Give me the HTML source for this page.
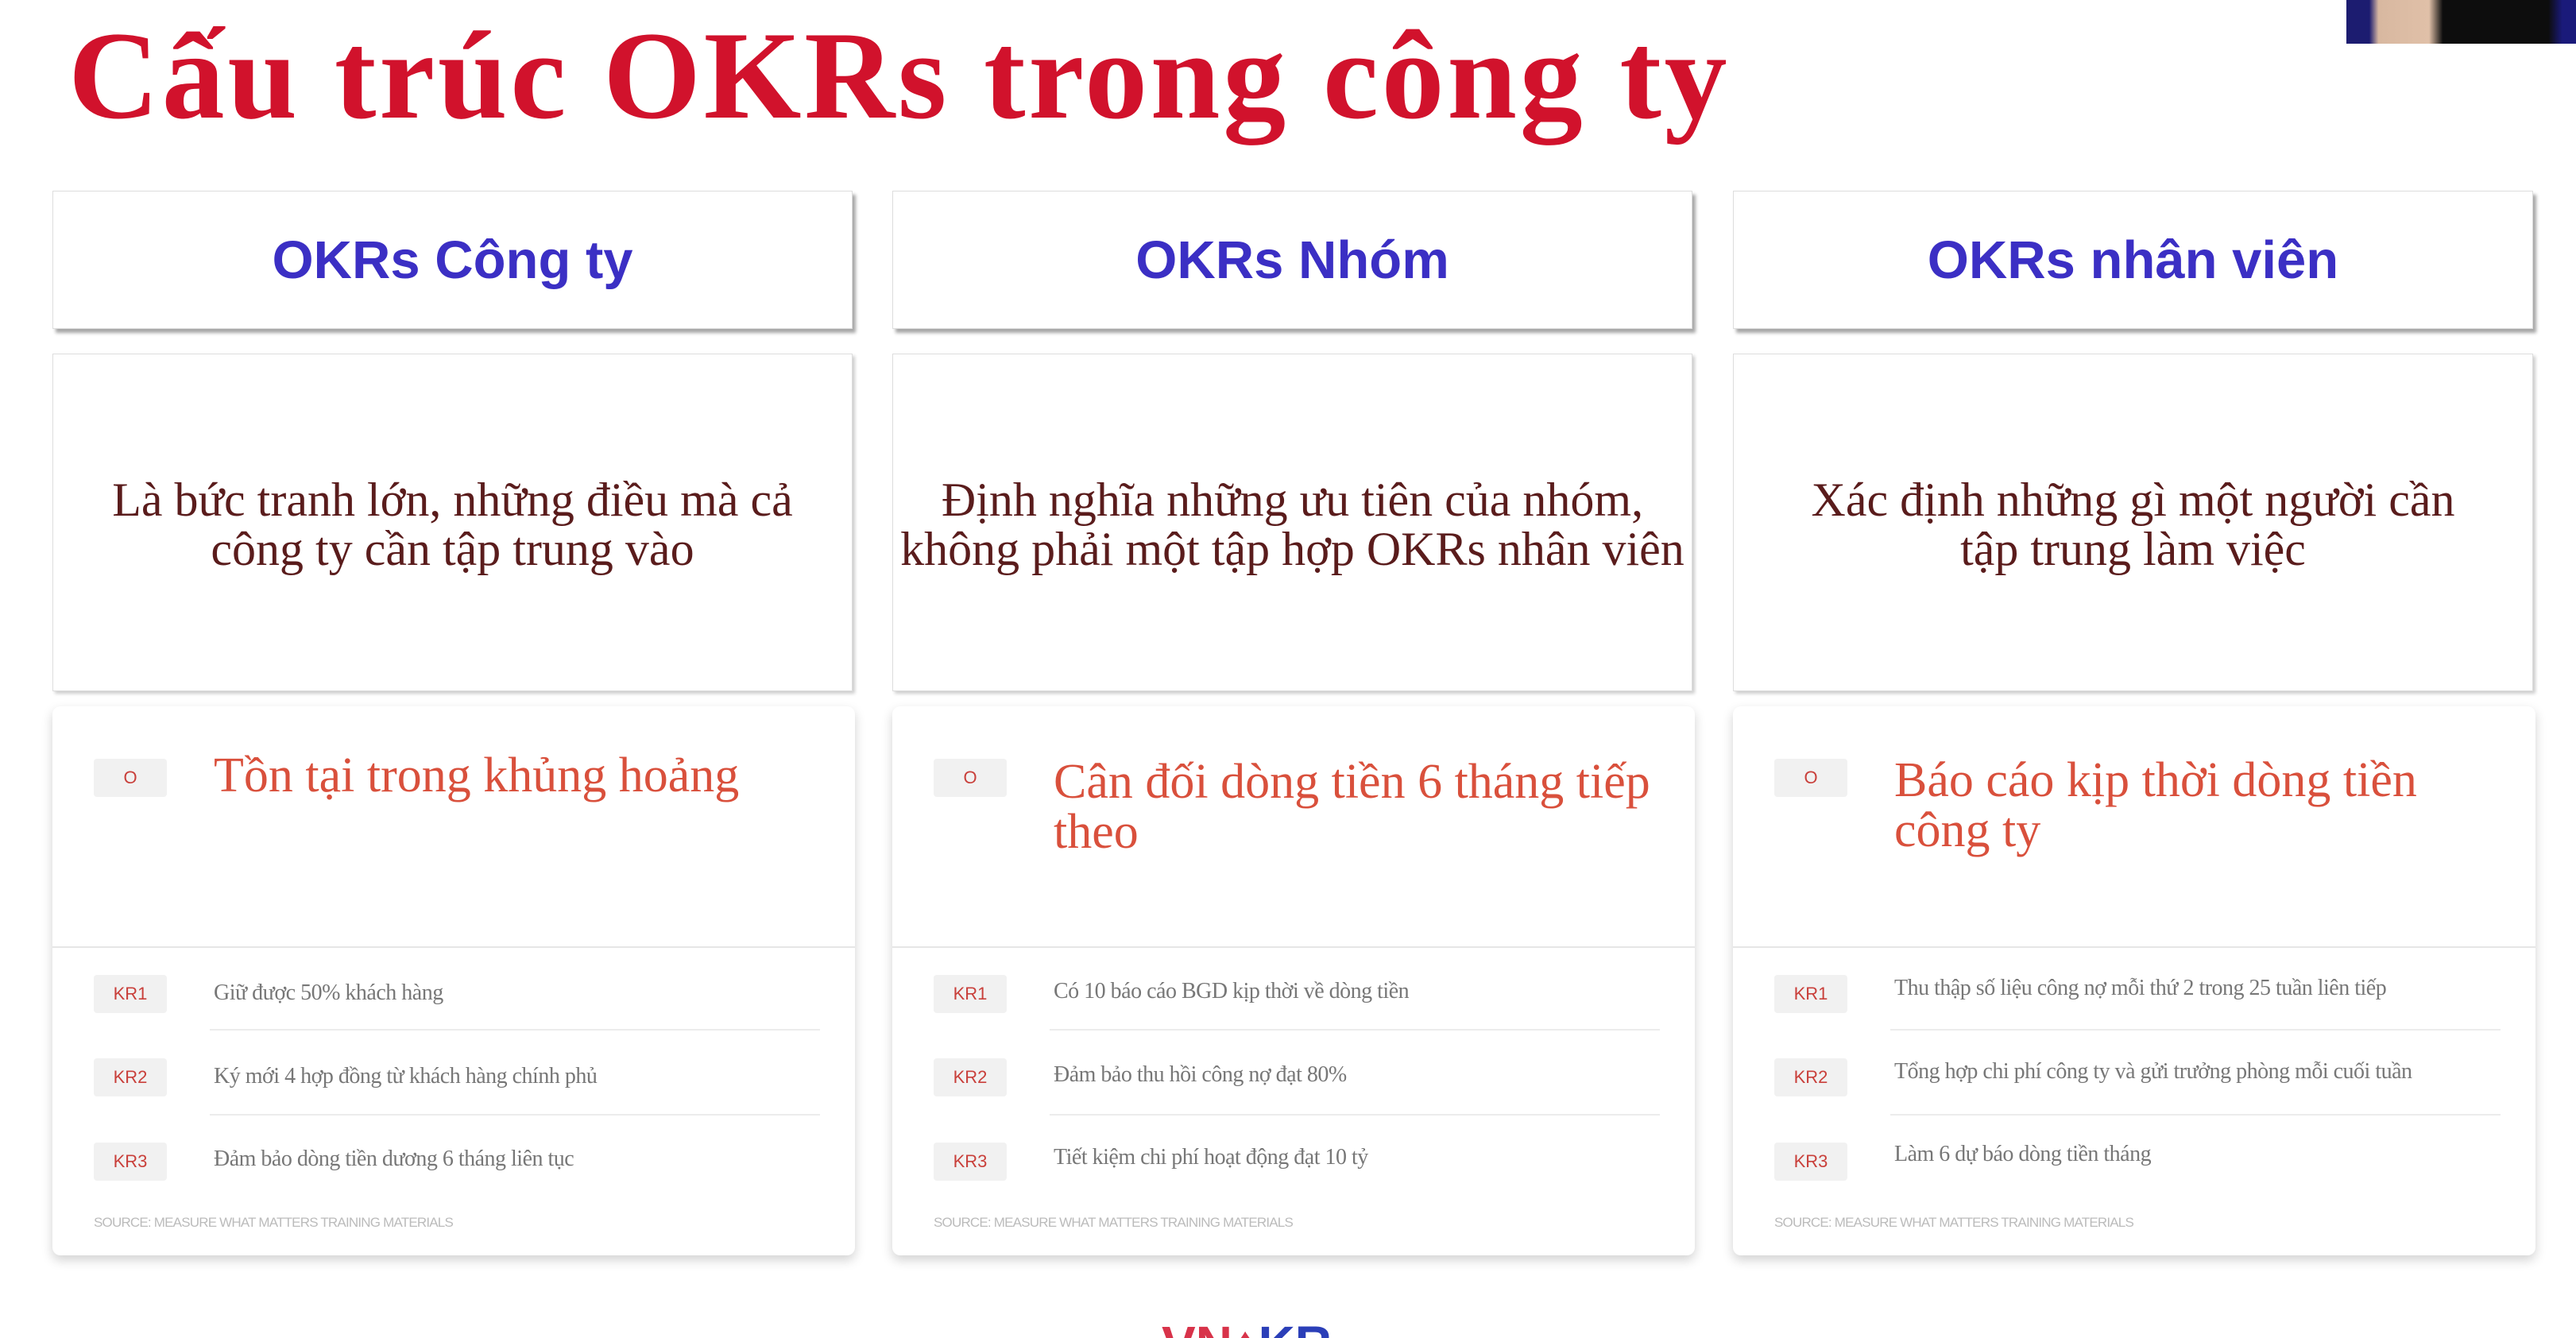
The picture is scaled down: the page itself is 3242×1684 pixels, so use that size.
<!DOCTYPE html>
<html style="width:3242px;height:1684px;overflow:hidden"><head><meta charset="utf-8">
<style>
*{margin:0;padding:0;box-sizing:border-box}
body{width:3242px;height:1684px;background:#fff;position:relative;overflow:hidden;font-family:"Liberation Serif",serif}
.title{position:absolute;left:86px;top:6px;font-size:158px;font-weight:bold;color:#d1122c;letter-spacing:3.6px;white-space:nowrap;line-height:180px}
.hd{position:absolute;top:240px;height:174px;width:1007px;background:#fff;border:1px solid #ddd;box-shadow:4px 5px 4px rgba(0,0,0,.35);display:flex;align-items:center;justify-content:center;font-family:"Liberation Sans",sans-serif;font-size:67px;font-weight:bold;color:#3b2fc4}
.ds{position:absolute;top:445px;height:425px;width:1007px;background:#fff;border:1px solid #ddd;box-shadow:3px 3px 4px rgba(0,0,0,.2);display:flex;align-items:center;justify-content:center;text-align:center;font-size:60px;line-height:62px;color:#5a1c1c;padding-top:4px}
.cd{position:absolute;top:889px;height:691px;width:1010px;background:#fff;border-radius:10px;box-shadow:0 6px 14px rgba(0,0,0,.18)}
.div{position:absolute;left:0;right:0;top:302px;border-top:2px solid #e6e6e6}
.bd{position:absolute;left:52px;width:92px;height:48px;background:#f1f1f1;border-radius:4px;color:#c9403b;font-family:"Liberation Sans",sans-serif;font-size:22px;display:flex;align-items:center;justify-content:center}
.ob{position:absolute;left:203px;top:50px;width:790px;font-size:62px;line-height:63px;color:#d9503c}
.kr{position:absolute;left:203px;font-size:28px;color:#777;white-space:nowrap;letter-spacing:-0.5px}
.ln{position:absolute;left:198px;width:768px;border-top:2px solid #ececec}
.src{position:absolute;left:52px;top:640px;font-family:"Liberation Sans",sans-serif;font-size:17px;color:#bbb;letter-spacing:-0.8px}
</style></head><body>
<div class="title">Cấu trúc OKRs trong công ty</div>
<div style="position:absolute;left:2953px;top:0;width:289px;height:55px;background:linear-gradient(90deg,#1c1c70 0%,#1c1c70 10%,#d8b8a0 14%,#e0c0a8 36%,#0d0d0d 42%,#0d0d0d 88%,#1a1a7a 94%,#1a1a7a 100%)"></div>

<div class="hd" style="left:66px">OKRs Công ty</div>
<div class="hd" style="left:1123px">OKRs Nhóm</div>
<div class="hd" style="left:2181px">OKRs nhân viên</div>

<div class="ds" style="left:66px">Là bức tranh lớn, những điều mà cả<br>công ty cần tập trung vào</div>
<div class="ds" style="left:1123px">Định nghĩa những ưu tiên của nhóm,<br>không phải một tập hợp OKRs nhân viên</div>
<div class="ds" style="left:2181px">Xác định những gì một người cần<br>tập trung làm việc</div>

<div class="cd" style="left:66px">
<div class="bd" style="top:66px">O</div>
<div class="ob" style="top:56px">Tồn tại trong khủng hoảng</div>
<div class="div"></div>
<div class="bd" style="top:338px">KR1</div><div class="kr" style="top:345px">Giữ được 50% khách hàng</div>
<div class="ln" style="top:406px"></div>
<div class="bd" style="top:443px">KR2</div><div class="kr" style="top:450px">Ký mới 4 hợp đồng từ khách hàng chính phủ</div>
<div class="ln" style="top:513px"></div>
<div class="bd" style="top:549px">KR3</div><div class="kr" style="top:554px">Đảm bảo dòng tiền dương 6 tháng liên tục</div>
<div class="src">SOURCE: MEASURE WHAT MATTERS TRAINING MATERIALS</div>
</div>

<div class="cd" style="left:1123px">
<div class="bd" style="top:66px">O</div>
<div class="ob" style="top:64px">Cân đối dòng tiền 6 tháng tiếp<br>theo</div>
<div class="div"></div>
<div class="bd" style="top:338px">KR1</div><div class="kr" style="top:343px">Có 10 báo cáo BGD kịp thời về dòng tiền</div>
<div class="ln" style="top:406px"></div>
<div class="bd" style="top:443px">KR2</div><div class="kr" style="top:448px">Đảm bảo thu hồi công nợ đạt 80%</div>
<div class="ln" style="top:513px"></div>
<div class="bd" style="top:549px">KR3</div><div class="kr" style="top:552px">Tiết kiệm chi phí hoạt động đạt 10 tỷ</div>
<div class="src">SOURCE: MEASURE WHAT MATTERS TRAINING MATERIALS</div>
</div>

<div class="cd" style="left:2181px">
<div class="bd" style="top:66px">O</div>
<div class="ob" style="top:62px">Báo cáo kịp thời dòng tiền<br>công ty</div>
<div class="div"></div>
<div class="bd" style="top:338px">KR1</div><div class="kr" style="top:339px">Thu thập số liệu công nợ mỗi thứ 2 trong 25 tuần liên tiếp</div>
<div class="ln" style="top:406px"></div>
<div class="bd" style="top:443px">KR2</div><div class="kr" style="top:444px">Tổng hợp chi phí công ty và gửi trưởng phòng mỗi cuối tuần</div>
<div class="ln" style="top:513px"></div>
<div class="bd" style="top:549px">KR3</div><div class="kr" style="top:548px">Làm 6 dự báo dòng tiền tháng</div>
<div class="src">SOURCE: MEASURE WHAT MATTERS TRAINING MATERIALS</div>
</div>

<div style="position:absolute;left:1462px;top:1660px;height:24px;overflow:hidden;font-family:'Liberation Sans',sans-serif;font-weight:bold;font-size:64px;line-height:64px;white-space:nowrap"><div><span style="color:#d8334a">VN</span><span style="color:#d8334a">♦</span><span style="color:#2b3fb8">KR</span></div></div>
</body></html>
